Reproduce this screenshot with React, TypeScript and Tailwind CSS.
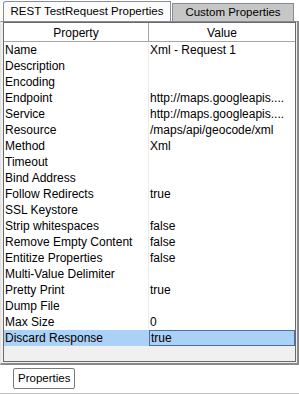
const rows: [string, string][] = [
  ["Name", "Xml - Request 1"],
  ["Description", ""],
  ["Encoding", ""],
  ["Endpoint", "http://maps.googleapis...."],
  ["Service", "http://maps.googleapis...."],
  ["Resource", "/maps/api/geocode/xml"],
  ["Method", "Xml"],
  ["Timeout", ""],
  ["Bind Address", ""],
  ["Follow Redirects", "true"],
  ["SSL Keystore", ""],
  ["Strip whitespaces", "false"],
  ["Remove Empty Content", "false"],
  ["Entitize Properties", "false"],
  ["Multi-Value Delimiter", ""],
  ["Pretty Print", "true"],
  ["Dump File", ""],
  ["Max Size", "0"],
  ["Discard Response", "true"],
];

export default function App() {
  return (
    <div className="w-[299px] h-[394px] bg-white flex flex-col text-[12px] text-black font-['Liberation_Sans',Arial,sans-serif] overflow-hidden">
      {/* tabs */}
      <div className="h-[21px] flex items-end pl-[3px] gap-[1px] text-[11.5px]">
        <div className="h-[20px] w-[168px] bg-[#fcfcfc] border border-b-0 border-[#898c95] rounded-tl-[3px] flex items-center justify-center pt-[1px]">
          REST TestRequest Properties
        </div>
        <div className="h-[18px] w-[122px] bg-[#c6c6c6] border border-b-0 border-[#898c95] flex items-center justify-center pt-[1px]">
          Custom Properties
        </div>
      </div>

      {/* panel */}
      <div className="h-[344px] border-t border-l border-t-[#898c95] border-l-[#e3e3e3] border-r-2 border-b-2 border-r-[#8a8a8a] border-b-[#8a8a8a] bg-[#f0f0f0] pl-[2px] pr-[1px] pb-[1px] flex">
        <div className="flex-1 border border-[#696969] bg-[#f0f0f0] flex flex-col">
          <div className="grid grid-cols-[145px_1fr] h-[19px] bg-white border-b border-[#a5a5a5]">
            <div className="border-r border-[#a5a5a5] flex items-center justify-center pt-[1px]">Property</div>
            <div className="flex items-center justify-center pt-[1px]">Value</div>
          </div>
          {rows.map(([k, v], i) => {
            const sel = i === rows.length - 1;
            return (
              <div
                key={k}
                className={
                  sel
                    ? "grid grid-cols-[145px_1fr] h-[16px] bg-[#abd1f7]"
                    : "grid grid-cols-[145px_1fr] h-[16px] bg-white"
                }
              >
                <div
                  className={
                    sel
                      ? "pl-[1px] leading-[16px] border-r border-[#abd1f7] whitespace-nowrap"
                      : "pl-[1px] leading-[16px] border-r border-b border-[#ececec] whitespace-nowrap"
                  }
                >
                  {k}
                </div>
                <div
                  className={
                    sel
                      ? "pl-[1px] leading-[15px] border border-[#4d6ea3] whitespace-nowrap overflow-hidden"
                      : "pl-[1px] leading-[16px] border-b border-[#ececec] whitespace-nowrap overflow-hidden"
                  }
                >
                  {v}
                </div>
              </div>
            );
          })}
        </div>
      </div>

      {/* bottom */}
      <div className="flex-1 flex items-start pt-[3px] pl-[13px] border-b border-[#c3c3c3]">
        <button className="h-[21px] px-[4px] text-[11.5px] bg-white border border-[#7a7a7a] rounded-[2px] leading-[19px]">
          Properties
        </button>
      </div>
    </div>
  );
}
